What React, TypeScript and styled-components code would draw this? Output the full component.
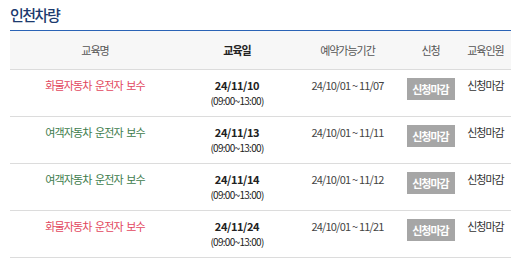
import React from "react";
import styled, { createGlobalStyle } from "styled-components";

const Global = createGlobalStyle`
  html, body { margin: 0; padding: 0; background: #fff; }
  body { font-family: "Noto Sans CJK KR", "Noto Sans", sans-serif; }
`;

const Page = styled.div`
  padding: 0 11px 0 10px;
`;

const Title = styled.h2`
  margin: 0;
  padding-top: 5px;
  height: 25px;
  box-sizing: border-box;
  font-size: 15px;
  line-height: 20px;
  font-weight: 500;
  letter-spacing: -1.5px;
  color: #1d3a6e;
`;

const Table = styled.div`
  border-top: 1px solid #2a63b6;
  margin-top: 5px;
`;

const Grid = styled.div<{ $head?: boolean }>`
  display: grid;
  grid-template-columns: 170px 114px 107px 59px 51px;
  border-bottom: 1px solid #dcdcdc;
  background: ${(p) => (p.$head ? "#f7f7f7" : "#fff")};
  height: ${(p) => (p.$head ? "39px" : "47px")};
  box-sizing: border-box;
  align-items: ${(p) => (p.$head ? "center" : "start")};
`;

const HeadCell = styled.div<{ $strong?: boolean }>`
  text-align: center;
  font-size: 11px;
  letter-spacing: -1px;
  color: ${(p) => (p.$strong ? "#222" : "#555")};
  font-weight: ${(p) => (p.$strong ? 700 : 400)};
`;

const Cell = styled.div`
  text-align: center;
  padding-top: 8px;
  font-size: 11px;
  line-height: 15px;
  color: #333;
  letter-spacing: -1px;
`;

const Name = styled(Cell)<{ $kind: "cargo" | "passenger" }>`
  letter-spacing: -0.9px;
  word-spacing: 2px;
  color: ${(p) => (p.$kind === "cargo" ? "#e2475e" : "#3d7c4c")};
`;

const DateMain = styled.div`
  font-weight: 700;
  color: #222;
  font-size: 11px;
  letter-spacing: -0.4px;
`;

const DateTime = styled.div`
  font-size: 10px;
  letter-spacing: -0.7px;
  color: #222;
`;

const Period = styled(Cell)`
  letter-spacing: -0.8px;
  color: #444;
`;

const BtnCell = styled(Cell)`
  display: flex;
  justify-content: center;
`;

const ClosedButton = styled.span`
  display: inline-flex;
  align-items: center;
  justify-content: center;
  width: 48px;
  height: 22px;
  background: #a6a6a6;
  color: #fff;
  font-weight: 700;
  font-size: 11px;
  letter-spacing: -1px;
`;

const rows = [
  { name: "화물자동차 운전자 보수", kind: "cargo" as const, date: "24/11/10", period: "24/10/01 ~ 11/07" },
  { name: "여객자동차 운전자 보수", kind: "passenger" as const, date: "24/11/13", period: "24/10/01 ~ 11/11" },
  { name: "여객자동차 운전자 보수", kind: "passenger" as const, date: "24/11/14", period: "24/10/01 ~ 11/12" },
  { name: "화물자동차 운전자 보수", kind: "cargo" as const, date: "24/11/24", period: "24/10/01 ~ 11/21" },
];

export default function App() {
  return (
    <Page>
      <Global />
      <Title>인천차량</Title>
      <Table>
        <Grid $head>
          <HeadCell>교육명</HeadCell>
          <HeadCell $strong>교육일</HeadCell>
          <HeadCell>예약가능기간</HeadCell>
          <HeadCell>신청</HeadCell>
          <HeadCell>교육인원</HeadCell>
        </Grid>
        {rows.map((r, i) => (
          <Grid key={i}>
            <Name $kind={r.kind}>{r.name}</Name>
            <Cell>
              <DateMain>{r.date}</DateMain>
              <DateTime>(09:00~13:00)</DateTime>
            </Cell>
            <Period>{r.period}</Period>
            <BtnCell>
              <ClosedButton>신청마감</ClosedButton>
            </BtnCell>
            <Cell>신청마감</Cell>
          </Grid>
        ))}
      </Table>
    </Page>
  );
}
